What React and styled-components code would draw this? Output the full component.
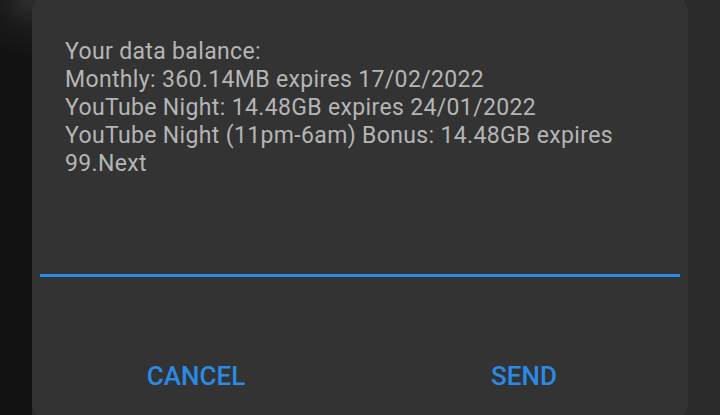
import React from 'react';
import styled, { createGlobalStyle } from 'styled-components';

const GlobalStyle = createGlobalStyle`
  html, body {
    margin: 0;
    padding: 0;
    background: #2b2b2b;
    overflow: hidden;
  }
`;

const Screen = styled.div`
  display: flex;
  width: 720px;
  height: 415px;
  overflow: hidden;
  font-family: Roboto, 'Liberation Sans', sans-serif;
`;

const Side = styled.div`
  width: 32px;
  flex-shrink: 0;
  background: ${(p) =>
    p.$left
      ? 'radial-gradient(circle at 30px 0px, #2e2e2e 0px, #1a1a1a 30px, #121212 60px)'
      : '#2b2b2b'};
`;

const Dialog = styled.div`
  flex: 1;
  margin: -6px 0;
  height: 427px;
  background: #333333;
  border-radius: 18px;
  display: flex;
  flex-direction: column;
`;

const Message = styled.div`
  padding: 44px 33px 0;
  height: 236px;
  color: #b5b5b5;
  font-size: 23px;
  letter-spacing: 0.35px;
  line-height: 28px;
`;

const Field = styled.div`
  margin: 0 8px;
  height: 3px;
  background: #2a8ae6;
`;

const Actions = styled.div`
  display: grid;
  grid-template-columns: 1fr 1fr;
  margin-top: 84px;
`;

const Action = styled.button`
  background: none;
  border: none;
  padding: 0;
  font-family: Roboto, 'Liberation Sans', sans-serif;
  font-weight: 500;
  font-size: 26px;
  line-height: 30px;
  color: #2a8ae6;
  text-align: center;
`;

const lines = [
  'Your data balance:',
  'Monthly: 360.14MB expires 17/02/2022',
  'YouTube Night: 14.48GB expires 24/01/2022',
  'YouTube Night (11pm-6am) Bonus: 14.48GB expires',
  '99.Next',
];

export default function App() {
  return (
    <>
      <GlobalStyle />
      <Screen>
        <Side $left />
        <Dialog>
          <Message>
            {lines.map((l) => (
              <div key={l}>{l}</div>
            ))}
          </Message>
          <Field />
          <Actions>
            <Action>CANCEL</Action>
            <Action>SEND</Action>
          </Actions>
        </Dialog>
        <Side />
      </Screen>
    </>
  );
}
